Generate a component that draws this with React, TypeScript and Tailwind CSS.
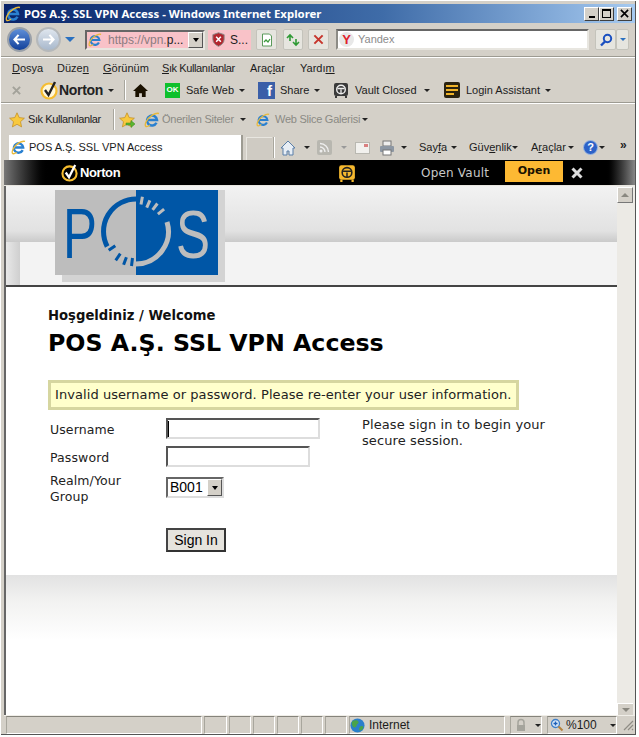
import type { ReactNode } from 'react';

const UI = 'font-["Liberation_Sans",sans-serif] text-[11px] text-[#1c1c1c] whitespace-nowrap';

function Caret({ className = '' }: { className?: string }) {
  return <span className={`w-0 h-0 shrink-0 border-x-[3px] border-t-[3px] border-x-transparent border-t-[#222] ${className}`} />;
}

function Label({ className = '', children }: { className?: string; children: ReactNode }) {
  return <span className={`shrink-0 ${UI} ${className}`}>{children}</span>;
}

function IeIcon({ className = '' }: { className?: string }) {
  return (
    <svg viewBox="0 0 16 16" className={`shrink-0 ${className}`}>
      <path d="M12.500 10.800A5 5 0 1 1 13 8H3.500" fill="none" stroke="#2a80d0" strokeWidth="2.500" />
      <path d="M15 1.500C11.500 .5 5 4 2 10c-1 2.500-1 4 0 4.500 1 .5 2.500-.3 4-1.500" fill="none" stroke="#e8b93a" strokeWidth="1.400" />
    </svg>
  );
}

function CheckLogo({ className = '', dark = false }: { className?: string; dark?: boolean }) {
  return (
    <svg viewBox="0 0 18 20" className={`shrink-0 ${className}`}>
      <circle cx="9" cy="11" r="7.500" fill={dark ? '#000' : '#fff7d8'} stroke="#f6bd2f" strokeWidth="2.200" />
      <path d="M5 10l3.500 5L15 2" fill="none" stroke={dark ? '#fff' : '#222'} strokeWidth="2.400" />
    </svg>
  );
}

function Star({ className = '', add = false }: { className?: string; add?: boolean }) {
  return (
    <svg viewBox="0 0 16 16" className={`shrink-0 ${className}`}>
      <path d="M8 .8l2.200 4.800 5.200.6-3.900 3.500 1.100 5.200L8 12.300l-4.600 2.600 1.100-5.200L.6 6.200l5.200-.6z" fill="#f8c93e" stroke="#c08a1e" strokeWidth=".7" />
      {add && <path d="M7 11h5V8.500l4 3.500-4 3.500V13H7z" fill="#5cb531" stroke="#3b8a1c" strokeWidth=".5" />}
    </svg>
  );
}

function Vault({ className = '', yellow = false }: { className?: string; yellow?: boolean }) {
  return (
    <svg viewBox="0 0 16 16" className={`shrink-0 ${className}`}>
      <rect x="1" y="1" width="14" height="13" rx="2" fill={yellow ? '#f5b82e' : '#3a3a3a'} />
      <path d="M3 14v2M13 14v2" stroke={yellow ? '#f5b82e' : '#3a3a3a'} strokeWidth="2" />
      <circle cx="8" cy="7.500" r="4.300" fill="none" stroke={yellow ? '#222' : '#eee'} strokeWidth="1.400" />
      <path d="M4.500 6.500h7M8 7.500v4" stroke={yellow ? '#222' : '#eee'} strokeWidth="1.300" />
    </svg>
  );
}

function PosLogo() {
  return (
    <svg viewBox="55 190 163 85" className="w-[163px] h-[85px] block overflow-visible">
      <rect x="55" y="190" width="81" height="85" fill="#bdbdbd" />
      <rect x="136" y="190" width="82" height="85" fill="#0056a6" />
      <text x="63" y="258" fontFamily="Liberation Sans" fontSize="70" fill="#0056a6" textLength="34" lengthAdjust="spacingAndGlyphs">P</text>
      <text x="176" y="258" fontFamily="Liberation Sans" fontSize="68" fill="#bdbdbd" textLength="34" lengthAdjust="spacingAndGlyphs">S</text>
      <path d="M136 199A32.500 32.500 0 0 0 107.200 246.500" fill="none" stroke="#0056a6" strokeWidth="5" />
      <path d="M167 222A32.500 32.500 0 0 1 136 264" fill="none" stroke="#bdbdbd" strokeWidth="5" />
      <path d="M115.300 245.700L108.700 250.300M120.300 253.700L115.700 260.300M126.400 257.200L123.600 264.800M132.500 258L131.500 266" stroke="#0056a6" strokeWidth="3" />
      <path d="M141 204.600L142.400 196.800M146.700 207.600L149.900 200.400M152.600 209.900L157.400 203.500M157.900 214.200L164.100 209.200" stroke="#bdbdbd" strokeWidth="3" />
    </svg>
  );
}

function Sep() {
  return <div className="h-[2px] shrink-0 border-t border-[#9d9b92] bg-white ml-[-3px]" />;
}

function WinButton({ children }: { children: ReactNode }) {
  return (
    <div className="w-[15px] h-[14px] flex items-center justify-center bg-[#d4d0c8] border border-t-white border-l-white border-r-[#404040] border-b-[#404040] shrink-0">
      {children}
    </div>
  );
}

function NavTool({ className = '', children }: { className?: string; children: ReactNode }) {
  return (
    <div className={`h-[21px] shrink-0 flex items-center justify-center bg-[#e6e5df] border border-[#c4c3bb] rounded-[2px] ${className}`}>
      {children}
    </div>
  );
}

function Panel({ className = '', children }: { className?: string; children?: ReactNode }) {
  return (
    <div className={`h-[18px] shrink-0 flex items-center border-t border-l border-t-[#85837b] border-l-[#a8a69d] border-b border-r border-b-white border-r-white ${className}`}>
      {children}
    </div>
  );
}

function TitleBar() {
  return (
    <div className="h-[19px] shrink-0 flex items-center bg-gradient-to-r from-[#0a246a] via-[#3f6ca8] via-60% to-[#a6caf0]">
      <IeIcon className="w-[16px] h-[16px] ml-[1px]" />
      <span className='ml-[3px] font-["Noto_Sans",sans-serif] font-bold text-[11.4px] text-white whitespace-nowrap'>
        POS A.Ş. SSL VPN Access - Windows Internet Explorer
      </span>
      <div className="ml-auto mr-[3px] flex">
        <WinButton><span className="w-[6px] h-[2px] bg-black mt-[6px]" /></WinButton>
        <WinButton><span className="w-[9px] h-[9px] border border-black border-t-2" /></WinButton>
        <div className="ml-[3px]">
          <WinButton>
            <svg viewBox="0 0 10 10" className="w-[9px] h-[9px]"><path d="M1 1l8 8M9 1l-8 8" stroke="#000" strokeWidth="1.800" /></svg>
          </WinButton>
        </div>
      </div>
    </div>
  );
}

function NavRow() {
  return (
    <div className="h-[33px] shrink-0 flex items-center">
      <div className="ml-[3px] w-[25px] h-[25px] shrink-0 rounded-full bg-gradient-to-b from-[#5f8fd8] to-[#12409a] border-2 border-[#9aa0a8] flex items-center justify-center">
        <svg viewBox="0 0 14 12" className="w-[13px] h-[11px]"><path d="M6 1L1.500 6 6 11M2 6h11" fill="none" stroke="#fff" strokeWidth="2.300" /></svg>
      </div>
      <div className="ml-[4px] w-[25px] h-[25px] shrink-0 rounded-full bg-gradient-to-b from-[#dfe6ee] to-[#a8b8cc] border-2 border-[#b5b8ba] flex items-center justify-center">
        <svg viewBox="0 0 14 12" className="w-[13px] h-[11px]"><path d="M8 1l4.500 5L8 11M12 6H1" fill="none" stroke="#fff" strokeWidth="2.300" /></svg>
      </div>
      <span className="ml-[4px] w-0 h-0 shrink-0 border-x-[5px] border-t-[5px] border-x-transparent border-t-[#2a70c0]" />
      <div className="ml-[10px] w-[120px] h-[20px] shrink-0 flex items-center bg-[#f9c2c8] border-2 border-t-[#666] border-l-[#666] border-b-[#e8e6e0] border-r-[#e8e6e0]">
        <IeIcon className="w-[14px] h-[14px] ml-[1px]" />
        <span className={`ml-[6px] ${UI} !text-[#8b7c80] !text-[12px]`}>https://vpn.<span className="text-[#222]">p...</span></span>
        <div className="ml-auto w-[15px] h-full flex items-center justify-center bg-[#d4d0c8] border border-t-white border-l-white border-r-[#555] border-b-[#555]">
          <span className="w-0 h-0 border-x-[3px] border-t-[4px] border-x-transparent border-t-black" />
        </div>
      </div>
      <div className="ml-[3px] w-[43px] h-[20px] shrink-0 flex items-center bg-[#f9c2c8]">
        <svg viewBox="0 0 16 16" className="ml-[3px] w-[15px] h-[15px] shrink-0">
          <path d="M8 .8l6 2v5c0 3.500-2.500 6-6 7.500-3.500-1.500-6-4-6-7.500v-5z" fill="#b3262e" stroke="#888" />
          <path d="M5.500 5l5 5.500M10.500 5l-5 5.500" stroke="#fff" strokeWidth="1.600" />
        </svg>
        <span className={`ml-[4px] ${UI} !text-[12px]`}>S...</span>
      </div>
      <NavTool className="ml-[5px] w-[21px]">
        <svg viewBox="0 0 14 14" className="w-[14px] h-[14px]"><path d="M2.500 1h7l2 2v10h-9z" fill="#fff" stroke="#5a9a5a" /><path d="M4 9l2-2 2 2 2-3" fill="none" stroke="#3c9a3c" strokeWidth="1.300" /></svg>
      </NavTool>
      <NavTool className="ml-[6px] w-[20px]">
        <svg viewBox="0 0 14 14" className="w-[14px] h-[14px]"><path d="M1 5l3-3 3 3M4 2v6M13 9l-3 3-3-3M10 12V6" fill="none" stroke="#2f9a35" strokeWidth="1.600" /></svg>
      </NavTool>
      <NavTool className="ml-[5px] w-[21px]">
        <svg viewBox="0 0 12 12" className="w-[11px] h-[11px]"><path d="M1.500 1.500l9 9M10.500 1.500l-9 9" stroke="#c6352c" strokeWidth="2.200" /></svg>
      </NavTool>
      <div className="ml-[7px] w-[253px] h-[21px] shrink-0 flex items-center bg-white border-2 border-t-[#666] border-l-[#8d8c86] border-b-[#e8e6e0] border-r-[#e8e6e0]">
        <div className="ml-[1px] w-[15px] h-[15px] shrink-0 bg-[#e8e8e8] rounded-full flex items-center justify-center font-['Liberation_Sans',sans-serif] font-bold text-[13px] text-[#e0202a]">Y</div>
        <span className={`ml-[4px] ${UI} !text-[#8c8c8c]`}>Yandex</span>
      </div>
      <NavTool className="ml-[6px] w-[21px]">
        <svg viewBox="0 0 14 14" className="w-[14px] h-[14px]"><circle cx="8.500" cy="5.500" r="3.700" fill="none" stroke="#1a4fc0" strokeWidth="2" /><path d="M6 8.500L2 12.500" stroke="#1a4fc0" strokeWidth="2.400" /></svg>
      </NavTool>
      <NavTool className="w-[13px]">
        <span className="w-0 h-0 border-x-[3px] border-t-[3px] border-x-transparent border-t-[#2a70c0]" />
      </NavTool>
    </div>
  );
}

function MenuRow() {
  return (
    <div className="h-[20px] shrink-0 flex items-center pt-[1px]">
      <Label className="ml-[8px] w-[45px]"><u>D</u>osya</Label>
      <Label className="w-[46px]">Düze<u>n</u></Label>
      <Label className="w-[59px]"><u>G</u>örünüm</Label>
      <Label className="w-[88px] tracking-[-0.4px]"><u>S</u>ık Kullanılanlar</Label>
      <Label className="w-[50px]">Araç<u>l</u>ar</Label>
      <Label>Yardı<u>m</u></Label>
    </div>
  );
}

function NortonRow() {
  return (
    <div className="h-[24px] shrink-0 flex items-center">
      <svg viewBox="0 0 10 10" className="ml-[8px] w-[9px] h-[9px] shrink-0"><path d="M1 1l8 8M9 1l-8 8" stroke="#a3a29a" strokeWidth="2.200" /></svg>
      <CheckLogo className="ml-[19px] w-[18px] h-[20px]" />
      <span className="ml-[1px] w-[45px] shrink-0 font-['Liberation_Sans',sans-serif] font-bold text-[14px] tracking-[-0.3px] text-[#222]">Norton</span>
      <Caret className="ml-[4px]" />
      <span className="ml-[10px] w-[2px] h-[20px] shrink-0 border-l border-[#a8a69d] bg-white" />
      <svg viewBox="0 0 16 16" className="ml-[7px] w-[15px] h-[15px] shrink-0"><path d="M8 1L0 8.500h2.500V15h4v-4h3v4h4V8.500H16z" fill="#1a1100" /></svg>
      <div className="ml-[17px] w-[15px] h-[15px] shrink-0 bg-[#0ec02c] flex items-center justify-center font-['Liberation_Sans',sans-serif] font-bold text-[8px] text-white">OK</div>
      <Label className="ml-[6px] w-[48px]">Safe Web</Label>
      <Caret className="ml-[5px]" />
      <div className="ml-[13px] w-[17px] h-[17px] shrink-0 bg-[#3b5fa8] flex items-end justify-end pr-[3px] font-['Liberation_Sans',sans-serif] font-bold text-[15px] leading-[16px] text-white">f</div>
      <Label className="ml-[5px] w-[29px]">Share</Label>
      <Caret className="ml-[5px]" />
      <Vault className="ml-[13px] w-[16px] h-[16px]" />
      <Label className="ml-[6px] w-[61px]">Vault Closed</Label>
      <Caret className="ml-[8px]" />
      <div className="ml-[14px] w-[16px] h-[16px] shrink-0 bg-[#2a2310] rounded-[2px] flex flex-col justify-center gap-[2px] px-[2px]">
        <span className="h-[2px] bg-[#f0b429]" />
        <span className="h-[2px] bg-[#f0b429]" />
        <span className="h-[2px] w-[8px] bg-[#f0b429]" />
      </div>
      <Label className="ml-[6px] w-[75px]">Login Assistant</Label>
      <Caret className="ml-[4px]" />
    </div>
  );
}

function FavRow() {
  return (
    <div className="h-[31px] shrink-0 flex items-center">
      <Star className="ml-[5px] w-[16px] h-[16px]" />
      <Label className="ml-[3px] w-[72px] tracking-[-0.4px]">Sık Kullanılanlar</Label>
      <span className="ml-[13px] w-[2px] h-[21px] shrink-0 border-l border-[#a8a69d] bg-white" />
      <Star add className="ml-[4px] w-[16px] h-[16px]" />
      <IeIcon className="ml-[9px] w-[16px] h-[16px]" />
      <Label className="ml-[2px] w-[72px] tracking-[-0.25px] !text-[#8b8a84]">Önerilen Siteler</Label>
      <Caret className="ml-[6px]" />
      <IeIcon className="ml-[10px] w-[14px] h-[14px]" />
      <Label className="ml-[5px] w-[82px] tracking-[-0.25px] !text-[#8b8a84]">Web Slice Galerisi</Label>
      <Caret className="ml-[5px]" />
    </div>
  );
}

function TabRow() {
  return (
    <div className="h-[25px] shrink-0 flex items-end">
      <div className="ml-[5px] w-[234px] h-[25px] shrink-0 flex items-center bg-white border-r-2 border-[#9d9b92]">
        <IeIcon className="ml-[2px] w-[15px] h-[15px]" />
        <Label className="ml-[3px]">POS A.Ş. SSL VPN Access</Label>
      </div>
      <div className="ml-[3px] w-[26px] h-[23px] shrink-0 bg-[#cfcbc3] border-t border-l border-[#e8e6e0]" />
      <div className="h-[25px] flex items-center">
        <span className="ml-[1px] w-[2px] h-[21px] shrink-0 border-l border-[#a8a69d] bg-white" />
        <svg viewBox="0 0 16 16" className="ml-[5px] w-[16px] h-[16px] shrink-0"><path d="M8 1L1 8h2v7h4v-4h2v4h4V8h2z" fill="#e8eef5" stroke="#5a7fa8" /></svg>
        <Caret className="ml-[8px]" />
        <svg viewBox="0 0 15 15" className="ml-[7px] w-[15px] h-[15px] shrink-0"><rect width="15" height="15" rx="2" fill="#b8b7b0" /><circle cx="4" cy="11" r="1.500" fill="#eee" /><path d="M3 7a5 5 0 0 1 5 5M3 3.500A8.500 8.500 0 0 1 11.500 12" fill="none" stroke="#eee" strokeWidth="1.400" /></svg>
        <Caret className="ml-[9px] !border-t-[#999]" />
        <svg viewBox="0 0 15 12" className="ml-[8px] w-[15px] h-[12px] shrink-0"><rect x=".5" y=".5" width="14" height="11" fill="#f2f1ee" stroke="#b9b8b1" /><path d="M9 2h4v3H9z" fill="#d98080" /></svg>
        <svg viewBox="0 0 16 16" className="ml-[9px] w-[16px] h-[16px] shrink-0"><rect x="4" y="1" width="8" height="5" fill="#eee" stroke="#777" /><rect x="1" y="6" width="14" height="6" rx="1" fill="#8d97a3" /><rect x="4" y="10" width="8" height="5" fill="#fff" stroke="#777" /></svg>
        <Caret className="ml-[6px]" />
        <Label className="ml-[12px] w-[27px]">Say<u>f</u>a</Label>
        <Caret className="ml-[5px]" />
        <Label className="ml-[12px] w-[40px]">Güv<u>e</u>nlik</Label>
        <Caret className="ml-[3px]" />
        <Label className="ml-[13px] w-[33px]">A<u>r</u>açlar</Label>
        <Caret className="ml-[4px]" />
        <div className="ml-[9px] w-[15px] h-[15px] shrink-0 rounded-full bg-[#2c62c8] border border-[#9db8e0] flex items-center justify-center font-['Liberation_Sans',sans-serif] font-bold text-[11px] text-white">?</div>
        <Caret className="ml-[1px]" />
        <span className="ml-[15px] mb-[6px] font-['Liberation_Sans',sans-serif] font-bold text-[12px] text-[#222]">»</span>
      </div>
    </div>
  );
}

function NortonBar() {
  return (
    <div className="h-[26px] shrink-0 flex items-center bg-black border-b border-[#e8e6e0]">
      <div className="w-[46px] h-full shrink-0 bg-gradient-to-r from-[#777] to-black" />
      <CheckLogo dark className="ml-[11px] w-[17px] h-[19px]" />
      <span className="ml-[2px] w-[40px] shrink-0 font-['Liberation_Sans',sans-serif] font-bold text-[13px] tracking-[-0.4px] text-white">Norton</span>
      <Vault yellow className="ml-[218px] w-[18px] h-[18px]" />
      <span className="ml-[65px] w-[70px] shrink-0 font-['DejaVu_Sans',sans-serif] text-[12px] tracking-[0.2px] text-[#c8c8c8] whitespace-nowrap">Open Vault</span>
      <div className="ml-[14px] w-[58px] h-[21px] mb-[3px] shrink-0 bg-[#fdb933] flex items-center justify-center font-['DejaVu_Sans',sans-serif] font-bold text-[11px] text-[#1a1100]">Open</div>
      <svg viewBox="0 0 12 12" className="ml-[8px] w-[12px] h-[12px] shrink-0"><path d="M1.500 1.500l9 9M10.500 1.500l-9 9" stroke="#ddd" strokeWidth="3" /></svg>
      <div className="ml-auto w-[30px] h-full shrink-0 bg-gradient-to-r from-black to-[#888]" />
    </div>
  );
}

function Page() {
  const verdana = 'font-["DejaVu_Sans",sans-serif]';
  return (
    <div className="flex-1 min-w-0 flex flex-col bg-white">
      {/* banner */}
      <div className="h-[101px] shrink-0 relative flex flex-col border-b-2 border-[#444]">
        <div className="h-[56px] bg-gradient-to-b from-[#f2f2f2] via-[#e2e2e2] via-80% to-[#cacaca]" />
        <div className="flex-1 flex">
          <div className="w-[14px] bg-gradient-to-r from-[#e8e8e8] to-[#cfcfcf]" />
          <div className="flex-1 bg-[#f3f3f3]" />
        </div>
        <div className="absolute left-[49px] top-[4px] shadow-[7px_0_0_#d3d3d3,7px_7px_0_#d3d3d3]">
          <PosLogo />
        </div>
      </div>
      {/* login */}
      <div className={`h-[288px] shrink-0 pl-[42px] ${verdana} text-[#222]`}>
        <div className="pt-[21px] font-bold text-[13.2px] leading-[16px] text-[#111]">Hoşgeldiniz / Welcome</div>
        <h1 className="mt-[3px] font-bold text-[23.7px] leading-[32px] text-black whitespace-nowrap">POS A.Ş. SSL VPN Access</h1>
        <div className="mt-[21px] w-[471px] h-[30px] flex items-center pl-[4px] bg-[#ffffcc] border-[3px] border-[#d6d6a0] text-[13px] tracking-[0.07px] whitespace-nowrap">
          Invalid username or password. Please re-enter your user information.
        </div>
        <div className="mt-[8px] flex text-[12.5px] tracking-[0.1px]">
          <div className="w-[314px] shrink-0 grid grid-cols-[118px_1fr] items-center">
            <span className="pl-[2px] h-[28px] pb-[4px] flex items-center">Username</span>
            <div className="h-[28px] flex items-start">
              <div className="w-[154px] h-[21px] bg-white border-2 border-t-[#555] border-l-[#555] border-b-[#ddd] border-r-[#ddd] flex items-center">
                <span className="w-[1px] h-[16px] bg-black" />
              </div>
            </div>
            <span className="pl-[2px] h-[28px] pb-[4px] flex items-center">Password</span>
            <div className="h-[28px] flex items-start">
              <div className="w-[144px] h-[21px] bg-white border-2 border-t-[#555] border-l-[#555] border-b-[#ddd] border-r-[#ddd]" />
            </div>
            <span className="pl-[2px] self-start -mt-[1px] leading-[16px]">Realm/Your<br />Group</span>
            <div className="flex items-start h-[42px]">
              <div className="mt-[3px] w-[58px] h-[21px] flex items-center border-2 border-t-[#666] border-l-[#666] border-b-[#ddd] border-r-[#ddd] bg-white">
                <span className="ml-[2px] font-['Liberation_Sans',sans-serif] text-[14px] tracking-normal text-black">B001</span>
                <div className="ml-auto w-[15px] h-full flex items-center justify-center bg-[#d4d0c8] border border-t-white border-l-white border-r-[#555] border-b-[#555]">
                  <span className="w-0 h-0 border-x-[3px] border-t-[4px] border-x-transparent border-t-black" />
                </div>
              </div>
            </div>
            <div />
            <div className="mt-[12px] w-[60px] h-[24px] flex items-center justify-center bg-[#e5e3dd] border-2 border-[#333] border-t-[#444] border-l-[#444] font-['Liberation_Sans',sans-serif] text-[14px] tracking-normal text-black">
              Sign In
            </div>
          </div>
          <div className="w-[200px] -mt-[1px] leading-[16px] text-[13px]">Please sign in to begin your secure session.</div>
        </div>
      </div>
      {/* footer band */}
      <div className="h-[65px] shrink-0 bg-gradient-to-b from-[#e2e2e2] via-[#f2f2f1] via-40% to-white" />
      <div className="flex-1 bg-white" />
    </div>
  );
}

function Scrollbar() {
  return (
    <div className="w-[18px] shrink-0 flex flex-col bg-[#eceae5] border-r-2 border-[#eceae5]">
      <div className="mt-[1px] h-[16px] flex items-center justify-center bg-[#d4d0c8] border border-t-white border-l-white border-r-[#777] border-b-[#777]">
        <span className="w-0 h-0 border-x-[4px] border-b-[4px] border-x-transparent border-b-[#8a8880]" />
      </div>
      <div className="flex-1" />
      <div className="h-[12px] flex items-center justify-center bg-[#d4d0c8] border-l border-t border-white">
        <span className="w-0 h-0 border-x-[4px] border-t-[4px] border-x-transparent border-t-[#8a8880]" />
      </div>
    </div>
  );
}

function StatusBar() {
  return (
    <div className="h-[19px] shrink-0 flex items-center border-t border-[#f0eee8]">
      <Panel className="ml-[2px] w-[196px]" />
      <Panel className="ml-[2px] w-[23px]" />
      <Panel className="ml-[2px] w-[22px]" />
      <Panel className="ml-[2px] w-[22px]" />
      <Panel className="ml-[2px] w-[22px]" />
      <Panel className="ml-[2px] w-[22px]" />
      <Panel className="ml-[2px] w-[22px]" />
      <Panel className="ml-[2px] w-[156px]">
        <svg viewBox="0 0 16 16" className="w-[15px] h-[15px] shrink-0">
          <circle cx="8" cy="8" r="7.500" fill="#2b7fcb" />
          <path d="M3 3c2-1 5-1 6 1s-2 2-2 4-3 3-4 1-2-4 0-6zM11 9c2-1 4 0 3 2s-3 3-4 2 0-3 1-4z" fill="#4aa34a" />
        </svg>
        <Label className="ml-[4px] !text-[12px]">Internet</Label>
      </Panel>
      <Panel className="ml-[5px] w-[32px]">
        <svg viewBox="0 0 14 14" className="ml-[3px] w-[14px] h-[14px] shrink-0"><path d="M4 7V4.500a3 3 0 0 1 6 0V7" fill="none" stroke="#a5a49c" strokeWidth="1.500" /><rect x="3" y="7" width="8" height="6" fill="#a5a49c" /></svg>
        <Caret className="ml-[7px]" />
      </Panel>
      <Panel className="ml-[5px] w-[70px]">
        <svg viewBox="0 0 14 14" className="ml-[2px] w-[14px] h-[14px] shrink-0"><circle cx="5.500" cy="5.500" r="4" fill="#d9e8f8" stroke="#3f7fc8" strokeWidth="1.300" /><path d="M3.500 5.500h4M5.500 3.500v4" stroke="#1c5fb8" strokeWidth="1.300" /><path d="M8.500 8.500l4 4" stroke="#b5823a" strokeWidth="2" /></svg>
        <Label className="ml-[2px] !text-[12px]">%100</Label>
        <Caret className="ml-[13px]" />
      </Panel>
      <svg viewBox="0 0 12 12" className="ml-auto mr-[1px] w-[12px] h-[12px] shrink-0"><path d="M11 2l-9 9M11 6l-5 5M11 10l-1 1" stroke="#8f8d85" strokeWidth="1.200" /></svg>
    </div>
  );
}

export default function App() {
  return (
    <div className="w-[639px] h-[737px] overflow-hidden bg-white pl-[1px] pr-[3px] pt-[1px] pb-[2px]">
      <div className="h-full flex flex-col bg-[#d4d0c8] pl-[3px] pt-[3px] border-r border-b border-[#555]">
        <TitleBar />
        <NavRow />
        <Sep />
        <MenuRow />
        <NortonRow />
        <Sep />
        <FavRow />
        <TabRow />
        <NortonBar />
        <div className="flex-1 min-h-0 flex border-l-2 border-[#666]">
          <Page />
          <Scrollbar />
        </div>
        <StatusBar />
      </div>
    </div>
  );
}
